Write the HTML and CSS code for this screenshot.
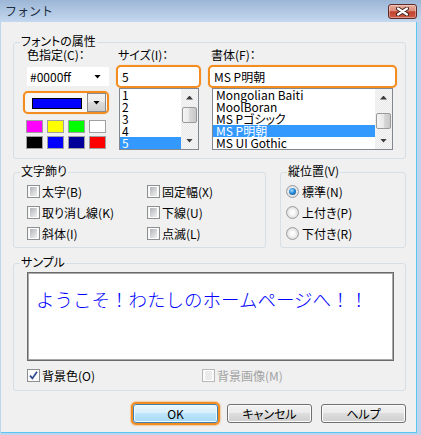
FILE: index.html
```html
<!DOCTYPE html>
<html lang="ja">
<head>
<meta charset="utf-8">
<title>フォント</title>
<link rel="stylesheet" href="styles.css">
</head>
<body>
<div class="window">
  <div class="titlebar">
    <span class="title">フォント</span>
    <span class="close" aria-label="閉じる">
      <svg width="13" height="9" viewBox="0 0 13 9"><path d="M2 1.5 L11 7.5 M11 1.5 L2 7.5" stroke="#3b1c18" stroke-width="4" stroke-linecap="round"/><path d="M2 1.5 L11 7.5 M11 1.5 L2 7.5" stroke="#fff" stroke-width="2.2" stroke-linecap="round"/></svg>
    </span>
  </div>
  <div class="client">
    <section class="group attrs">
      <div class="group-title">フォントの属性</div>
      <div class="attr-row">
        <div class="col col-color">
          <div class="label">色指定(C)：</div>
          <div class="combo"><span>#0000ff</span><span class="tri"></span></div>
          <div class="ring color-combo">
            <span class="color-swatch"></span>
            <span class="drop-btn"><span class="tri"></span></span>
          </div>
          <div class="palette">
            <span class="sw sw-magenta"></span>
            <span class="sw sw-yellow"></span>
            <span class="sw sw-lime"></span>
            <span class="sw sw-white"></span>
            <span class="sw sw-black"></span>
            <span class="sw sw-blue"></span>
            <span class="sw sw-navy"></span>
            <span class="sw sw-red"></span>
          </div>
        </div>
        <div class="col col-size">
          <div class="label">サイズ(I)：</div>
          <div class="ring field">5</div>
          <div class="listbox size-list">
            <div class="items">
              <div class="item">1</div>
              <div class="item">2</div>
              <div class="item">3</div>
              <div class="item">4</div>
              <div class="item selected">5</div>
            </div>
            <div class="vscroll">
              <span class="sb-btn"><span class="tri up"></span></span>
              <span class="sb-track"><span class="thumb"></span></span>
              <span class="sb-btn"><span class="tri down"></span></span>
            </div>
          </div>
        </div>
        <div class="col col-font">
          <div class="label">書体(F)：</div>
          <div class="ring field">MS P明朝</div>
          <div class="listbox font-list">
            <div class="items">
              <div class="item">Mongolian Baiti</div>
              <div class="item">MoolBoran</div>
              <div class="item">MS Pゴシック</div>
              <div class="item selected">MS P明朝</div>
              <div class="item">MS UI Gothic</div>
            </div>
            <div class="vscroll">
              <span class="sb-btn"><span class="tri up"></span></span>
              <span class="sb-track"><span class="thumb thumb-low"></span></span>
              <span class="sb-btn"><span class="tri down"></span></span>
            </div>
          </div>
        </div>
      </div>
    </section>

    <div class="group-row">
      <section class="group deco">
        <div class="group-title">文字飾り</div>
        <div class="check-grid">
          <label class="opt"><span class="check"></span>太字(B)</label>
          <label class="opt"><span class="check"></span>固定幅(X)</label>
          <label class="opt"><span class="check"></span>取り消し線(K)</label>
          <label class="opt"><span class="check"></span>下線(U)</label>
          <label class="opt"><span class="check"></span>斜体(I)</label>
          <label class="opt"><span class="check"></span>点滅(L)</label>
        </div>
      </section>
      <section class="group vpos">
        <div class="group-title">縦位置(V)</div>
        <div class="radio-list">
          <label class="opt"><span class="radio on"></span>標準(N)</label>
          <label class="opt"><span class="radio"></span>上付き(P)</label>
          <label class="opt"><span class="radio"></span>下付き(R)</label>
        </div>
      </section>
    </div>

    <section class="group sample-group">
      <div class="group-title">サンプル</div>
      <div class="sample"><span class="sample-text">ようこそ！わたしのホームページへ！！</span></div>
      <div class="sample-opts">
        <label class="opt bg-color"><span class="check checked"><svg width="9" height="9" viewBox="0 0 9 9"><path d="M1 4.6 L3.4 7.4 L8 0.8" fill="none" stroke="#2c4a8c" stroke-width="1.7"/></svg></span>背景色(O)</label>
        <label class="opt disabled"><span class="check"></span>背景画像(M)</label>
      </div>
    </section>

    <div class="buttons">
      <button class="btn default">OK</button>
      <button class="btn">キャンセル</button>
      <button class="btn">ヘルプ</button>
    </div>
  </div>
</div>
</body>
</html>
```

FILE: styles.css
```css
* { box-sizing: border-box; }
html, body { margin: 0; padding: 0; }
body {
  width: 421px;
  height: 435px;
  overflow: hidden;
  font-family: "Noto Sans CJK JP", "Liberation Sans", sans-serif;
  font-size: 12px;
  color: #000;
  font-feature-settings: "palt";
}

.window {
  width: 421px;
  height: 435px;
  display: flex;
  flex-direction: column;
  background: #bfd5ee;
}

.titlebar {
  height: 22px;
  flex: none;
  display: flex;
  align-items: center;
  justify-content: space-between;
  padding: 0 4px 0 5px;
  background: linear-gradient(#9cb6d6, #c4d8ef);
}
.title {
  font-size: 12px;
  line-height: 14px;
  color: #1e2d3f;
  font-feature-settings: normal;
}
.close {
  width: 29px;
  height: 15px;
  display: flex;
  align-items: center;
  justify-content: center;
  border: 1px solid #5c2b26;
  border-radius: 3px;
  background: linear-gradient(#e9ab9b 0%, #dc8d7b 45%, #c3412e 52%, #cc5c4a 100%);
  box-shadow: inset 0 0 0 1px rgba(255, 255, 255, 0.35);
}

.client {
  flex: 1;
  margin: 0 4px 2px 1px;
  background: #f0f0f0;
  border-right: 1px solid #5cc6f0;
  border-bottom: 1px solid #5cc6f0;
  padding: 20px 10px 0 12px;
}

/* group boxes */
.group {
  border: 1px solid #d5dfe5;
  border-radius: 3px;
}
.group-title {
  width: max-content;
  margin: -8px 0 0 6px;
  padding: 0 1px;
  background: #f0f0f0;
  line-height: 12px;
}

.attrs { padding-bottom: 8px; }
.attr-row {
  display: flex;
  margin-top: 2px;
  padding: 0 8px 0 9px;
  align-items: flex-start;
}
.col { display: flex; flex-direction: column; }
.col-color { width: 87px; }
.col-size { width: 85px; margin-left: 6px; }
.col-font { flex: 1; margin-left: 7px; }
.label { line-height: 12px; margin-left: 4px; }
.col-size .label { margin-left: 2px; }
.col-font .label { margin-left: 3px; }

.tri {
  display: block;
  width: 7px;
  height: 4px;
  background: #000;
  clip-path: polygon(0 0, 100% 0, 50% 100%);
}

.combo {
  margin: 6px 0 0 4px;
  width: 82px;
  height: 19px;
  background: #fff;
  display: flex;
  align-items: center;
  justify-content: space-between;
  padding: 0 8px 0 3px;
  line-height: 14px;
  font-feature-settings: normal;
}

.ring {
  border: 2px solid #f38d1f;
  border-radius: 5px;
  box-shadow: 0 0 1px 0 rgba(243, 141, 31, 0.6);
}
.color-combo {
  margin-top: 5px;
  width: 86px;
  height: 23px;
  display: flex;
  align-items: center;
  padding: 0 1px 0 7px;
  background: #f7f7f7;
}
.color-swatch {
  width: 50px;
  height: 11px;
  border: 1px solid #000;
  background: #0000ff;
  margin-top: 1px;
}
.drop-btn {
  margin-left: auto;
  width: 19px;
  height: 19px;
  border: 1px solid #8a8a8a;
  background: linear-gradient(#f4f4f4, #ebebeb 50%, #dcdcdc 50%, #cdcdcd);
  display: flex;
  align-items: center;
  justify-content: center;
}

.palette {
  margin: 6px 0 0 3px;
  display: grid;
  grid-template-columns: repeat(4, 17px);
  grid-auto-rows: 13px;
  column-gap: 4px;
  row-gap: 3px;
}
.sw { border: 1px solid #a0a0a0; }
.sw-magenta { background: #ff00ff; }
.sw-yellow { background: #ffff00; }
.sw-lime { background: #00ff00; }
.sw-white { background: #ffffff; }
.sw-black { background: #000000; }
.sw-blue { background: #0000ff; }
.sw-navy { background: #000099; }
.sw-red { background: #ff0000; }

.field {
  margin-top: 4px;
  height: 23px;
  background: #fff;
  padding: 0 4px;
  line-height: 19px;
}

.listbox {
  height: 62px;
  border: 1px solid #828790;
  background: #fff;
  display: flex;
}
.size-list { width: 80px; margin-left: 3px; }
.font-list { margin: 0 4px; }
.items { flex: 1; }
.item {
  height: 12px;
  line-height: 12px;
  padding-left: 2px;
  white-space: nowrap;
}
.font-list .item { padding-left: 3px; }
.item.selected { background: #3399ff; color: #fff; }

.vscroll {
  width: 17px;
  display: flex;
  flex-direction: column;
  background: repeating-conic-gradient(#e9e9e9 0 25%, #f7f7f7 0 50%) 0 0 / 2px 2px;
}
.sb-btn {
  height: 17px;
  display: flex;
  align-items: center;
  justify-content: center;
}
.tri.up { clip-path: polygon(50% 0, 100% 100%, 0 100%); background: #3c3c3c; }
.tri.down { background: #3c3c3c; }
.sb-track { flex: 1; }
.thumb {
  display: block;
  width: 15px;
  height: 16px;
  margin: 1px 0 0 1px;
  border: 1px solid #9a9a9a;
  border-radius: 2px;
  background: linear-gradient(90deg, #f4f4f4, #e9e9e9 50%, #d9d9d9 50%, #c8c8c8);
}
.thumb-low { margin-top: 7px; }

/* second row */
.group-row {
  display: flex;
  margin-top: 13px;
}
.deco { width: 253px; padding-bottom: 7px; }
.vpos { flex: 1; margin-left: 14px; padding-bottom: 7px; }

.check-grid {
  margin: 8px 0 0 13px;
  display: grid;
  grid-template-columns: 120px auto;
  grid-auto-rows: 13px;
  row-gap: 8px;
}
.radio-list {
  margin: 8px 0 0 5px;
  display: flex;
  flex-direction: column;
  gap: 8px;
}
.opt {
  display: flex;
  align-items: center;
  height: 13px;
  line-height: 13px;
  gap: 2px;
  white-space: nowrap;
}
.radio-list .opt { gap: 3px; }

.check {
  width: 13px;
  height: 13px;
  flex: none;
  border: 1px solid #8e8f8f;
  background: #f6f6f6;
  padding: 1px;
  display: flex;
  align-items: center;
  justify-content: center;
}
.check::before {
  content: "";
  display: block;
  width: 9px;
  height: 9px;
  border: 1px solid #fff;
  background: linear-gradient(135deg, #aeb2b9, #d8d9db 60%, #eeeeee);
}
.check.checked::before { display: none; }
.check.checked { background: #fbfbfb; padding: 0; }

.radio {
  width: 13px;
  height: 13px;
  flex: none;
  border-radius: 50%;
  border: 1px solid #9a9ca0;
  background: radial-gradient(circle at 50% 50%, #fbfbfb 25%, #dcdcdc 75%);
  display: flex;
  align-items: center;
  justify-content: center;
}
.radio.on::after {
  content: "";
  width: 7px;
  height: 7px;
  border-radius: 50%;
  background: radial-gradient(circle at 40% 35%, #a8e0ff 0, #2a8ad6 45%, #0d3f7a 100%);
}

/* sample */
.sample-group { margin-top: 15px; padding-bottom: 8px; }
.sample {
  margin: 4px 11px 0 13px;
  height: 89px;
  border: 1px solid #6a6a6a;
  box-shadow: inset 0 0 0 1px #a8a8a8;
  background: #fff;
  padding: 16px 0 0 8px;
}
.sample-text {
  color: #0000ff;
  font-size: 18.5px;
  line-height: 20px;
  font-weight: 300;
  font-feature-settings: normal;
  white-space: nowrap;
}
.sample-opts {
  margin: 8px 0 0 13px;
  display: flex;
}
.bg-color { width: 175px; }
.disabled { color: #a3a3a3; }
.disabled .check { border-color: #b8b8b8; }
.disabled .check::before { background: repeating-conic-gradient(#e2e2e2 0 25%, #f4f4f4 0 50%) 0 0 / 2px 2px; }

/* buttons */
.buttons {
  margin-top: 13px;
  display: flex;
  justify-content: flex-end;
  gap: 9px;
}
.btn {
  width: 85px;
  height: 19px;
  padding: 0;
  border: 1px solid #707070;
  border-radius: 3px;
  background: linear-gradient(#f2f2f2, #ebebeb 45%, #dddddd 50%, #cfcfcf);
  box-shadow: inset 0 0 0 1px #fcfcfc;
  font: inherit;
  font-feature-settings: "palt";
  line-height: 15px;
  color: #000;
}
.btn.default {
  border-color: #3c7fb1;
  background: linear-gradient(#eaf6fd, #d9f0fc 45%, #bee6fd 50%, #a7d9f5);
  box-shadow: inset 0 0 0 1px #f0fbff, 0 0 0 2px #f38d1f, 0 0 1px 3px rgba(243, 141, 31, 0.35);
}
```
